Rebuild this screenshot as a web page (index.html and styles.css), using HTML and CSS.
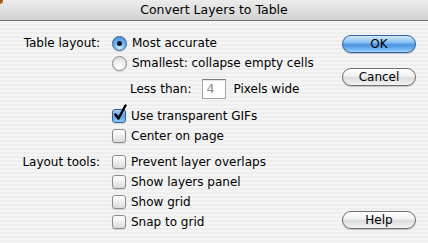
FILE: index.html
```html
<!DOCTYPE html>
<html>
<head>
<meta charset="utf-8">
<link rel="stylesheet" href="styles.css">
</head>
<body>
<div class="window">
  <span class="corner"></span>
  <div class="titlebar">Convert Layers to Table</div>
  <div class="main">
    <div class="form">
      <div class="group">
        <div class="label">Table layout:</div>
        <div class="controls">
          <div class="row"><span class="radio on"></span>Most accurate</div>
          <div class="row"><span class="radio"></span>Smallest: collapse empty cells</div>
          <div class="row sub"><span class="sublabel">Less than:</span><span class="field">4</span><span>Pixels wide</span></div>
          <div class="row gap"><span class="check on"><svg width="16" height="18" viewBox="0 0 16 18"><path d="M3.5 10.5 L6.5 14.5 L13.5 1.5" fill="none" stroke="#000" stroke-width="2.4" stroke-linecap="round" stroke-linejoin="round"/></svg></span>Use transparent GIFs</div>
          <div class="row"><span class="check"></span>Center on page</div>
        </div>
      </div>
      <div class="group second">
        <div class="label">Layout tools:</div>
        <div class="controls">
          <div class="row"><span class="check"></span>Prevent layer overlaps</div>
          <div class="row"><span class="check"></span>Show layers panel</div>
          <div class="row"><span class="check"></span>Show grid</div>
          <div class="row"><span class="check"></span>Snap to grid</div>
        </div>
      </div>
    </div>
    <div class="buttons">
      <button class="btn default">OK</button>
      <button class="btn">Cancel</button>
      <button class="btn help">Help</button>
    </div>
  </div>
</div>
</body>
</html>
```

FILE: styles.css
```css
html, body {
  margin: 0;
  padding: 0;
}
body {
  width: 428px;
  height: 243px;
  overflow: hidden;
  font-family: "DejaVu Sans", "Liberation Sans", sans-serif;
  font-size: 12px;
  color: #000;
}
.window {
  position: relative;
  width: 428px;
  height: 243px;
  display: flex;
  flex-direction: column;
  background: repeating-linear-gradient(to bottom, #eeeeee 0px, #eeeeee 2px, #f4f4f4 2px, #f4f4f4 4px);
}
.corner {
  position: absolute;
  left: 0;
  top: 0;
  width: 3px;
  height: 4px;
  background: linear-gradient(135deg, #8a4a10, #e08a2a);
  border-bottom-right-radius: 3px;
}
.titlebar {
  height: 20px;
  line-height: 20px;
  text-align: center;
  font-size: 12.5px;
  background: linear-gradient(to bottom, #ececec, #d2d2d2);
  border-bottom: 1px solid #6f6f6f;
  box-shadow: 0 1px 0 #f6f6f6;
}
.main {
  flex: 1;
  display: flex;
}
.form {
  flex: 1;
  padding-top: 12px;
}
.group {
  display: grid;
  grid-template-columns: 100px 1fr;
  column-gap: 12px;
}
.group.second {
  margin-top: 6px;
}
.label {
  text-align: right;
  line-height: 20px;
  height: 20px;
}
.row {
  display: flex;
  align-items: center;
  height: 20px;
  white-space: nowrap;
}
.row.sub {
  margin-top: 6px;
  padding-left: 18px;
}
.row.gap {
  margin-top: 7px;
}
.sublabel {
  margin-right: 10px;
}
.field {
  box-sizing: border-box;
  width: 24px;
  height: 20px;
  line-height: 18px;
  padding-left: 4px;
  background: #fff;
  border: 1px solid #a5a5a5;
  border-top-color: #7c7c7c;
  box-shadow: inset 0 1px 1px rgba(0,0,0,0.12);
  color: #8a8a8a;
  margin-right: 8px;
  font-size: 12.5px;
}
.radio {
  box-sizing: border-box;
  width: 15px;
  height: 15px;
  border-radius: 50%;
  margin-right: 5px;
  border: 1px solid #8c8c8c;
  background: radial-gradient(circle at 50% 75%, #ffffff 0%, #f2f2f2 40%, #d0d0d0 100%);
  box-shadow: 0 1px 1px rgba(0,0,0,0.15);
  position: relative;
}
.radio.on {
  border-color: #3b5f8f;
  background: radial-gradient(circle at 50% 80%, #c9ecff 0%, #6fb6ef 45%, #3d85d6 100%);
}
.radio.on::after {
  content: "";
  position: absolute;
  left: 4px;
  top: 4px;
  width: 5px;
  height: 5px;
  border-radius: 50%;
  background: #101828;
}
.check {
  box-sizing: border-box;
  width: 14px;
  height: 14px;
  border-radius: 3px;
  margin-right: 5px;
  border: 1px solid #8c8c8c;
  background: linear-gradient(to bottom, #ffffff 0%, #eeeeee 50%, #dadada 100%);
  box-shadow: 0 1px 1px rgba(0,0,0,0.12);
  position: relative;
}
.check.on {
  border-color: #3b5f8f;
  background: linear-gradient(to bottom, #a8d2f6 0%, #5aa0e6 50%, #8ec9f8 100%);
}
.check svg {
  position: absolute;
  left: -1px;
  top: -6px;
}
.buttons {
  width: 74px;
  margin-right: 12px;
  padding-top: 14px;
  padding-bottom: 14px;
  display: flex;
  flex-direction: column;
}
.btn {
  box-sizing: border-box;
  width: 74px;
  height: 18px;
  padding: 0;
  font-family: "DejaVu Sans", "Liberation Sans", sans-serif;
  font-size: 12px;
  line-height: 16px;
  color: #000;
  border-radius: 9px;
  border: 1px solid #6e6e6e;
  background: linear-gradient(to bottom, #ffffff 0%, #f0f0f0 45%, #dcdcdc 55%, #f4f4f4 100%);
  box-shadow: 0 1px 1px rgba(0,0,0,0.2);
}
.btn.default {
  border-color: #2f5e9e;
  background: linear-gradient(to bottom, #d6ebfc 0%, #86bff2 40%, #4b93e0 55%, #74b8f4 85%, #a8d8fc 100%);
}
.btn + .btn {
  margin-top: 15px;
}
.btn.help {
  margin-top: auto;
}
```
